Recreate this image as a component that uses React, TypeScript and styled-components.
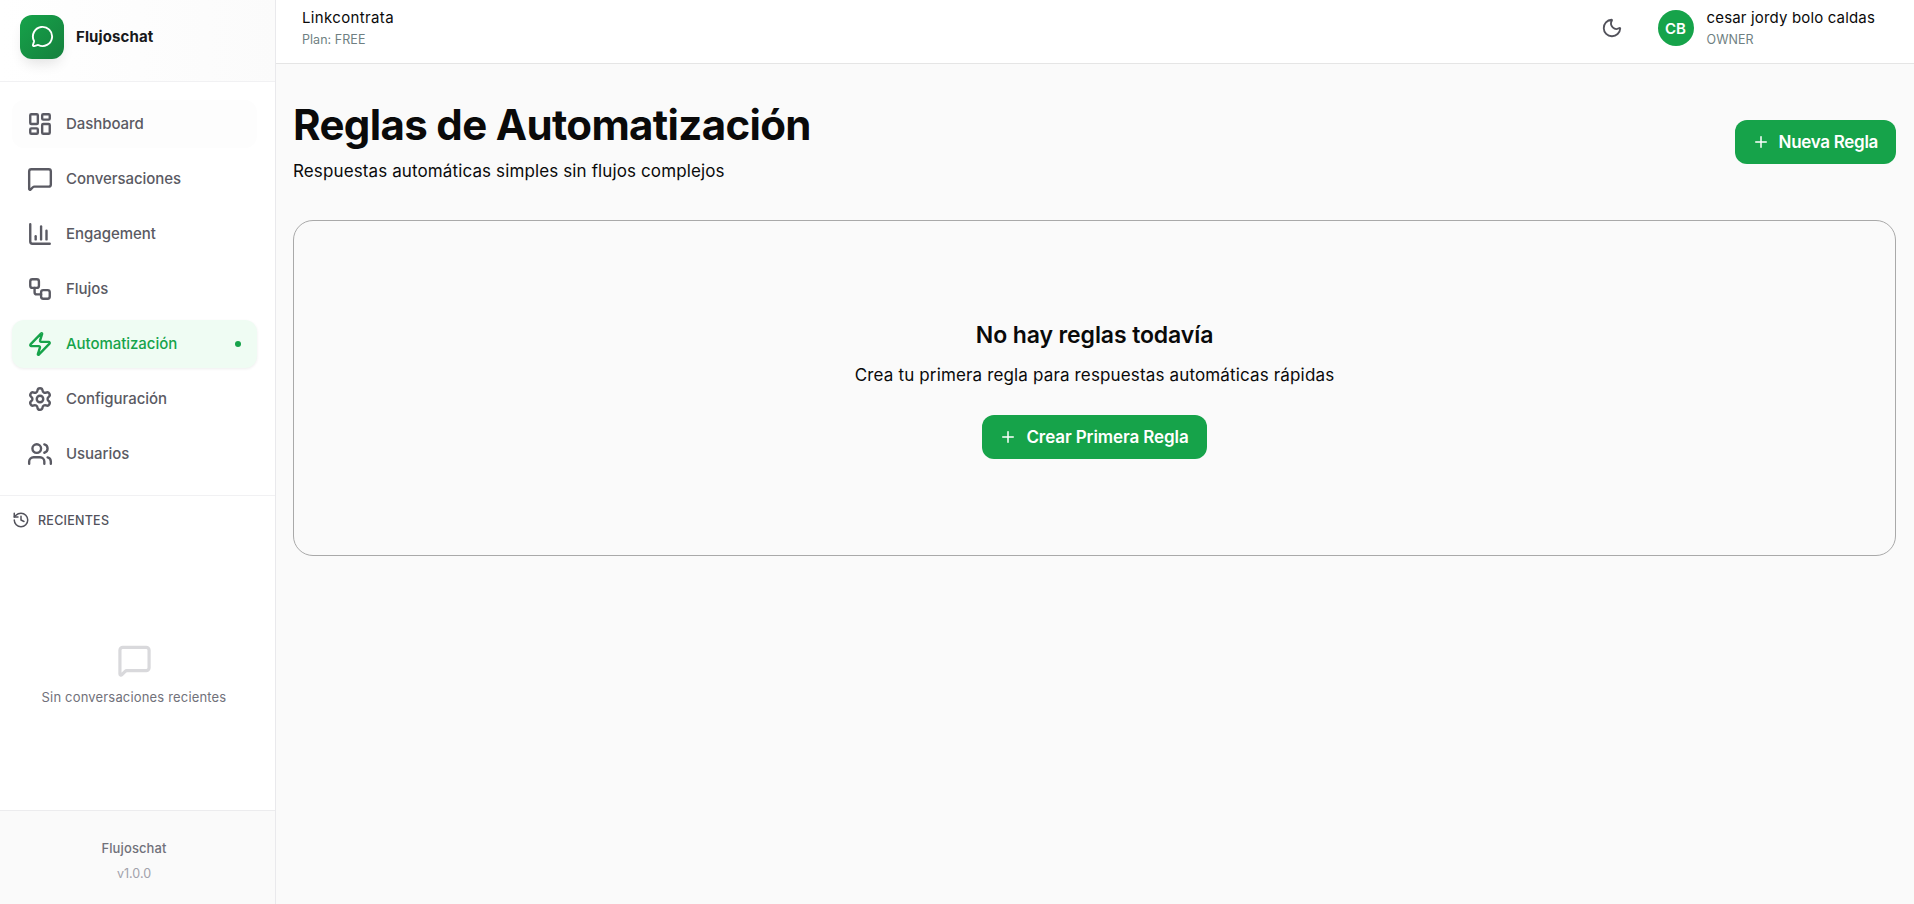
import React from "react";
import styled, { createGlobalStyle } from "styled-components";
import {
  LayoutDashboard,
  MessageSquare,
  ChartColumn,
  Workflow,
  Zap,
  Settings,
  Users,
  History,
  Moon,
  Plus,
  MessageCircle,
} from "lucide-react";

const Global = createGlobalStyle`
  * { box-sizing: border-box; }
  html, body { margin: 0; padding: 0; height: 100%; }
  body { font-family: Inter, "Liberation Sans", sans-serif; background: #fafafa; color: #0a0a0a; overflow: hidden; }
`;

const Shell = styled.div`
  display: flex;
  height: 100vh;
`;

const Sidebar = styled.aside`
  width: 276px;
  flex: none;
  display: flex;
  flex-direction: column;
  background: #fff;
  border-right: 1px solid #e9e9ec;
`;

const Brand = styled.div`
  height: 82px;
  flex: none;
  display: flex;
  align-items: center;
  gap: 12px;
  padding: 0 20px 8px;
  border-bottom: 1px solid #f1f1f3;
  background: linear-gradient(90deg, #fff, #fbfbfb);
`;

const LogoTile = styled.div`
  width: 44px;
  height: 44px;
  border-radius: 12px;
  display: flex;
  align-items: center;
  justify-content: center;
  color: #fff;
  background: linear-gradient(135deg, #16a34a, #15803d);
  box-shadow: 0 8px 14px -4px rgba(0, 0, 0, 0.12);
`;

const BrandName = styled.span`
  font-size: 15px;
  font-weight: 700;
  letter-spacing: 0.12px;
  color: #18181b;
`;

const Nav = styled.nav`
  display: flex;
  flex-direction: column;
  gap: 7px;
  padding: 18px 18px 17px 12px;
  border-bottom: 1px solid #f1f1f3;
`;

const navBackground = (p: { $active?: boolean; $hovered?: boolean }) => {
  if (p.$active) return "#effcf3";
  return p.$hovered ? "#fdfdfd" : "transparent";
};

const NavItem = styled.a<{ $active?: boolean; $hovered?: boolean }>`
  height: 48px;
  display: flex;
  align-items: center;
  gap: 13px;
  padding: 0 15px;
  border-radius: 12px;
  font-size: 15px;
  font-weight: 500;
  letter-spacing: -0.05px;
  color: ${(p) => (p.$active ? "#16a34a" : "#5a5a63")};
  background: ${navBackground};
  box-shadow: ${(p) => (p.$active ? "0 1px 3px rgba(0,0,0,0.07)" : "none")};
`;

const NavLabel = styled.span`
  margin-top: -2px;
`;

const ActiveDot = styled.span`
  width: 6px;
  height: 6px;
  border-radius: 50%;
  margin-left: auto;
  margin-right: 1px;
  background: #16a34a;
`;

const Recents = styled.section`
  flex: 1;
  display: flex;
  flex-direction: column;
  min-height: 0;
`;

const RecentsHead = styled.div`
  display: flex;
  align-items: center;
  gap: 8px;
  padding: 15px 12px 0;
  font-size: 12.5px;
  font-weight: 500;
  letter-spacing: 0.25px;
  color: #52525b;
  text-transform: uppercase;
`;

const RecentsEmpty = styled.div`
  flex: 1;
  display: flex;
  flex-direction: column;
  align-items: center;
  justify-content: center;
  gap: 11px;
  padding: 9px 7px 0 0;
  color: #71717a;
  font-size: 13px;
  letter-spacing: 0.17px;
  svg {
    color: #d9d9dc;
  }
`;

const Footer = styled.footer`
  height: 94px;
  flex: none;
  display: flex;
  flex-direction: column;
  align-items: center;
  justify-content: center;
  gap: 10px;
  padding: 5px 7px 0 0;
  background: #fafafa;
  border-top: 1px solid #ececee;
`;

const FooterName = styled.span`
  font-size: 13px;
  font-weight: 500;
  letter-spacing: 0.12px;
  color: #71717a;
`;

const FooterVersion = styled.span`
  font-size: 12.5px;
  color: #a1a1aa;
`;

const Main = styled.div`
  flex: 1;
  min-width: 0;
  display: flex;
  flex-direction: column;
`;

const Topbar = styled.header`
  height: 64px;
  flex: none;
  display: flex;
  align-items: center;
  justify-content: space-between;
  padding: 0 39px 7px 26px;
  background: #fff;
  border-bottom: 1px solid #e5e5e5;
`;

const StackedText = styled.div`
  display: flex;
  flex-direction: column;
  gap: 4px;
`;

const PrimaryLine = styled.span`
  font-size: 15px;
  line-height: 20px;
  letter-spacing: 0.16px;
  color: #0a0a0a;
`;

const CompanyName = styled(PrimaryLine)`
  letter-spacing: 0.36px;
`;

const SecondaryLine = styled.span`
  font-size: 12.5px;
  line-height: 16px;
  letter-spacing: 0.05px;
  color: #6f7f82;
`;

const TopRight = styled.div`
  display: flex;
  align-items: center;
`;

const ThemeButton = styled.button`
  width: 24px;
  height: 24px;
  padding: 0;
  margin-right: 34px;
  display: flex;
  align-items: center;
  justify-content: center;
  border: 0;
  background: none;
  color: #52525b;
`;

const Avatar = styled.div`
  width: 36px;
  height: 36px;
  border-radius: 50%;
  margin-right: 13px;
  display: flex;
  align-items: center;
  justify-content: center;
  background: #16a34a;
  color: #fff;
  font-size: 15px;
  font-weight: 600;
`;

const Content = styled.main`
  flex: 1;
  padding: 37px 18px 0 17px;
`;

const PageHead = styled.div`
  display: flex;
  align-items: center;
  justify-content: space-between;
`;

const Title = styled.h1`
  margin: 0;
  font-size: 42px;
  line-height: 48px;
  font-weight: 700;
  letter-spacing: -0.65px;
  color: #0a0a0a;
`;

const Subtitle = styled.p`
  margin: 10px 0 0;
  font-size: 17px;
  line-height: 24px;
  letter-spacing: 0.12px;
  color: #0a0a0a;
`;

const Primary = styled.button<{ $tight?: boolean }>`
  height: 44px;
  display: inline-flex;
  align-items: center;
  gap: 9px;
  padding: 0 18px 0 17px;
  border: 0;
  border-radius: 12px;
  background: #16a34a;
  color: #fff;
  font-family: inherit;
  font-size: 17px;
  font-weight: 600;
  letter-spacing: ${(p) => (p.$tight ? "-0.3px" : "-0.1px")};
`;

const EmptyCard = styled.section`
  margin-top: 37px;
  height: 336px;
  display: flex;
  flex-direction: column;
  align-items: center;
  padding-top: 99px;
  border: 1px solid #a9a9a9;
  border-radius: 20px;
`;

const EmptyTitle = styled.h2`
  margin: 0;
  font-size: 23px;
  line-height: 30px;
  font-weight: 600;
  letter-spacing: -0.1px;
  color: #0a0a0a;
`;

const EmptyText = styled.p`
  margin: 13px 0 28px;
  font-size: 17px;
  line-height: 24px;
  letter-spacing: 0.15px;
  color: #0a0a0a;
`;

const navItems = [
  { label: "Dashboard", Icon: LayoutDashboard, hovered: true },
  { label: "Conversaciones", Icon: MessageSquare },
  { label: "Engagement", Icon: ChartColumn },
  { label: "Flujos", Icon: Workflow },
  { label: "Automatización", Icon: Zap, active: true },
  { label: "Configuración", Icon: Settings },
  { label: "Usuarios", Icon: Users },
];

export default function App() {
  return (
    <Shell>
      <Global />
      <Sidebar>
        <Brand>
          <LogoTile>
            <MessageCircle size={23} strokeWidth={2} />
          </LogoTile>
          <BrandName>Flujoschat</BrandName>
        </Brand>
        <Nav>
          {navItems.map(({ label, Icon, active, hovered }) => (
            <NavItem key={label} $active={active} $hovered={hovered}>
              <Icon size={26} strokeWidth={2.2} />
              <NavLabel>{label}</NavLabel>
              {active && <ActiveDot />}
            </NavItem>
          ))}
        </Nav>
        <Recents>
          <RecentsHead>
            <History size={18} strokeWidth={2} />
            Recientes
          </RecentsHead>
          <RecentsEmpty>
            <MessageSquare size={35} strokeWidth={2.2} />
            Sin conversaciones recientes
          </RecentsEmpty>
        </Recents>
        <Footer>
          <FooterName>Flujoschat</FooterName>
          <FooterVersion>v1.0.0</FooterVersion>
        </Footer>
      </Sidebar>
      <Main>
        <Topbar>
          <StackedText>
            <CompanyName>Linkcontrata</CompanyName>
            <SecondaryLine>Plan: FREE</SecondaryLine>
          </StackedText>
          <TopRight>
            <ThemeButton aria-label="Tema">
              <Moon size={22} strokeWidth={2} />
            </ThemeButton>
            <Avatar>CB</Avatar>
            <StackedText>
              <PrimaryLine>cesar jordy bolo caldas</PrimaryLine>
              <SecondaryLine>OWNER</SecondaryLine>
            </StackedText>
          </TopRight>
        </Topbar>
        <Content>
          <PageHead>
            <div>
              <Title>Reglas de Automatización</Title>
              <Subtitle>Respuestas automáticas simples sin flujos complejos</Subtitle>
            </div>
            <Primary $tight>
              <Plus size={18} strokeWidth={2} />
              Nueva Regla
            </Primary>
          </PageHead>
          <EmptyCard>
            <EmptyTitle>No hay reglas todavía</EmptyTitle>
            <EmptyText>Crea tu primera regla para respuestas automáticas rápidas</EmptyText>
            <Primary>
              <Plus size={18} strokeWidth={2} />
              Crear Primera Regla
            </Primary>
          </EmptyCard>
        </Content>
      </Main>
    </Shell>
  );
}
